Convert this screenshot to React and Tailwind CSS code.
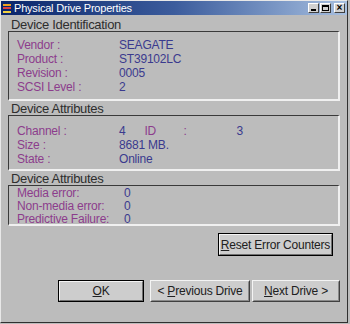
const font = { fontFamily: "'Liberation Sans',Arial,sans-serif" }

const Btn = ({ children, isDefault, className }) => (
  <div className={`${isDefault ? 'border border-black' : 'border border-[#f4f4f4] border-r-[#404040] border-b-[#404040]'} ${className}`}>
    <div
      className={`w-full h-full flex items-center justify-center whitespace-nowrap text-[12px] tracking-[-0.2px] text-[#202020] bg-[#cdcdcd] ${
        isDefault ? 'border border-[#f4f4f4] border-r-[#707070] border-b-[#707070]' : 'border border-transparent border-r-[#8a8a8a] border-b-[#8a8a8a]'
      }`}
    >
      {children}
    </div>
  </div>
)

const Group = ({ title, headerH, boxClass, children }) => (
  <div>
    <div className={`flex items-end pl-[3px] text-[13px] leading-[13px] tracking-[-0.3px] whitespace-nowrap text-[#2e2e2e] ${headerH}`}>{title}</div>
    <div className={`border-t border-l border-t-[#3a3a3a] border-l-[#3a3a3a] border-r-2 border-b-2 border-r-[#f0f0f0] border-b-[#f0f0f0] ${boxClass}`}>
      {children}
    </div>
  </div>
)

const Row = ({ label, value, h = 'h-[14px]', valX = 'w-[110px]', extra }) => (
  <div className={`flex items-center whitespace-nowrap text-[12px] leading-[13px] tracking-[-0.2px] ${h}`}>
    <span className={`shrink-0 pl-[8px] text-[#8c3c8c] ${valX}`}>{label}</span>
    <span className="text-[#3a3a8e]">{value}</span>
    {extra}
  </div>
)

const App = () => {
  return (
    <div className="w-[350px] h-[324px] bg-[#bcbcbc]" style={font}>
      <div className="w-[348px] h-[323px] border border-[#e8e8e8] border-r-[#303030] border-b-[#303030] flex flex-col">
        <div className="h-[14px] flex items-center bg-gradient-to-r from-[#0a246a] via-[#3c5c9c] to-[#a8c0e0] px-[1px]">
          <div className="w-[8px] h-[9px] flex flex-col justify-between mr-[3px] ml-[1px]">
            <div className="h-[2px] bg-[#f0a020]" />
            <div className="h-[2px] bg-[#e04040]" />
            <div className="h-[2px] bg-[#f0d040]" />
          </div>
          <span className="text-white text-[11px] leading-[11px] tracking-[-0.2px] whitespace-nowrap">Physical Drive Properties</span>
          <div className="ml-auto flex items-center gap-[1px] mr-[1px]">
            <div className="w-[11px] h-[10px] bg-[#d0d0d0] border border-white border-r-[#404040] border-b-[#404040] flex items-end justify-center pb-[1px]">
              <div className="w-[5px] h-[2px] bg-black" />
            </div>
            <div className="w-[11px] h-[10px] bg-[#d0d0d0] border border-white border-r-[#404040] border-b-[#404040] flex items-center justify-center">
              <div className="w-[7px] h-[6px] border border-black border-t-2" />
            </div>
            <div className="w-[11px] h-[10px] ml-[2px] bg-[#d0d0d0] border border-white border-r-[#404040] border-b-[#404040] flex items-center justify-center text-[10px] leading-[8px] font-bold text-black">
              ×
            </div>
          </div>
        </div>

        <div className="pl-[7px] pr-[7px]">
          <Group title="Device Identification" headerH="h-[16px]" boxClass="h-[70px] pt-[6px]">
            <Row label="Vendor :" value="SEAGATE" />
            <Row label="Product :" value="ST39102LC" />
            <Row label="Revision :" value="0005" />
            <Row label="SCSI Level :" value="2" />
          </Group>

          <Group title="Device Attributes" headerH="h-[14px]" boxClass="h-[56px] pt-[8px]">
            <Row
              label="Channel :"
              value="4"
              extra={
                <>
                  <span className="ml-[19px] w-[39px] shrink-0 text-[#8c3c8c]">ID</span>
                  <span className="w-[53px] shrink-0 text-[#8c3c8c]">:</span>
                  <span className="text-[#3a3a8e]">3</span>
                </>
              }
            />
            <Row label="Size :" value="8681 MB." />
            <Row label="State :" value="Online" />
          </Group>

          <Group title="Device Attributes" headerH="h-[14px]" boxClass="h-[41px] pt-[1px]">
            <Row label="Media error:" value="0" h="h-[13px]" valX="w-[115px]" />
            <Row label="Non-media error:" value="0" h="h-[13px]" valX="w-[115px]" />
            <Row label="Predictive Failure:" value="0" h="h-[13px]" valX="w-[115px]" />
          </Group>

          <div className="flex justify-end mt-[7px] pr-[7px]">
            <Btn isDefault className="w-[115px] h-[23px]">
              <span><span className="underline">R</span>eset Error Counters</span>
            </Btn>
          </div>

          <div className="flex mt-[24px] pl-[50px] gap-[6px]">
            <Btn isDefault className="w-[88px] h-[22px]">
              <span><span className="underline">O</span>K</span>
            </Btn>
            <div className="flex gap-[2px]">
              <Btn className="w-[100px] h-[22px]">
                <span>&lt; <span className="underline">P</span>revious Drive</span>
              </Btn>
              <Btn className="w-[88px] h-[22px]">
                <span><span className="underline">N</span>ext Drive &gt;</span>
              </Btn>
            </div>
          </div>
        </div>
      </div>
    </div>
  )
}

export default App
